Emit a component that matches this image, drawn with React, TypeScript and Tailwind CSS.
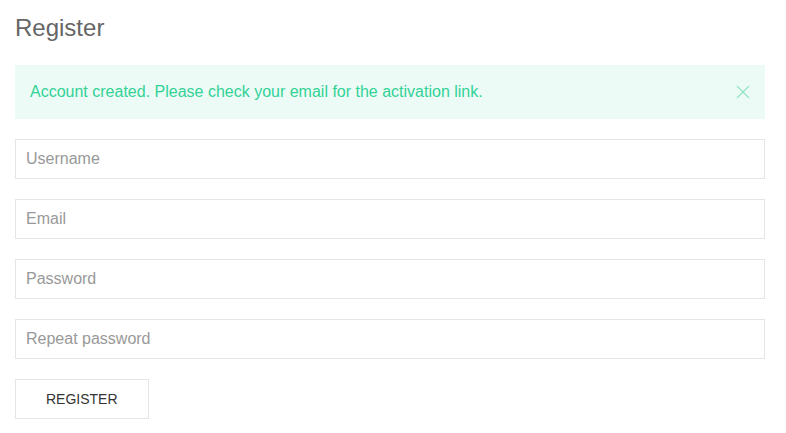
const fields = ["Username", "Email", "Password", "Repeat password"];

const App = () => {
  return (
    <div className="w-[786px] h-[433px] bg-white px-[15px] pt-[11px] font-['Liberation_Sans',Arial,sans-serif] text-[#666]">
      <h3 className="text-[24px] leading-[1.4] text-[#666] mb-[20px]">Register</h3>
      <div className="w-[750px]">
        <div className="relative bg-[#edfbf6] text-[#32d296] text-[16px] leading-[24px] py-[15px] pl-[15px] pr-[29px] mb-[20px]">
          <p>Account created. Please check your email for the activation link.</p>
          <button className="absolute top-[20px] right-[15px] opacity-50 text-[#32d296]">
            <svg width="14" height="14" viewBox="0 0 14 14">
              <line x1="1" y1="1" x2="13" y2="13" stroke="currentColor" strokeWidth="1.1" />
              <line x1="13" y1="1" x2="1" y2="13" stroke="currentColor" strokeWidth="1.1" />
            </svg>
          </button>
        </div>
        <form className="flex flex-col gap-[20px]">
          {fields.map((f) => (
            <input
              key={f}
              type={f.includes("assword") ? "password" : "text"}
              placeholder={f}
              className="h-[40px] w-full border border-[#e5e5e5] px-[10px] text-[16px] text-[#666] placeholder:text-[#999] outline-none"
            />
          ))}
          <div>
            <button
              type="button"
              className="h-[40px] border border-[#e5e5e5] px-[30px] text-[14px] leading-[38px] uppercase text-[#333]"
            >
              Register
            </button>
          </div>
        </form>
      </div>
    </div>
  );
};

export default App;
